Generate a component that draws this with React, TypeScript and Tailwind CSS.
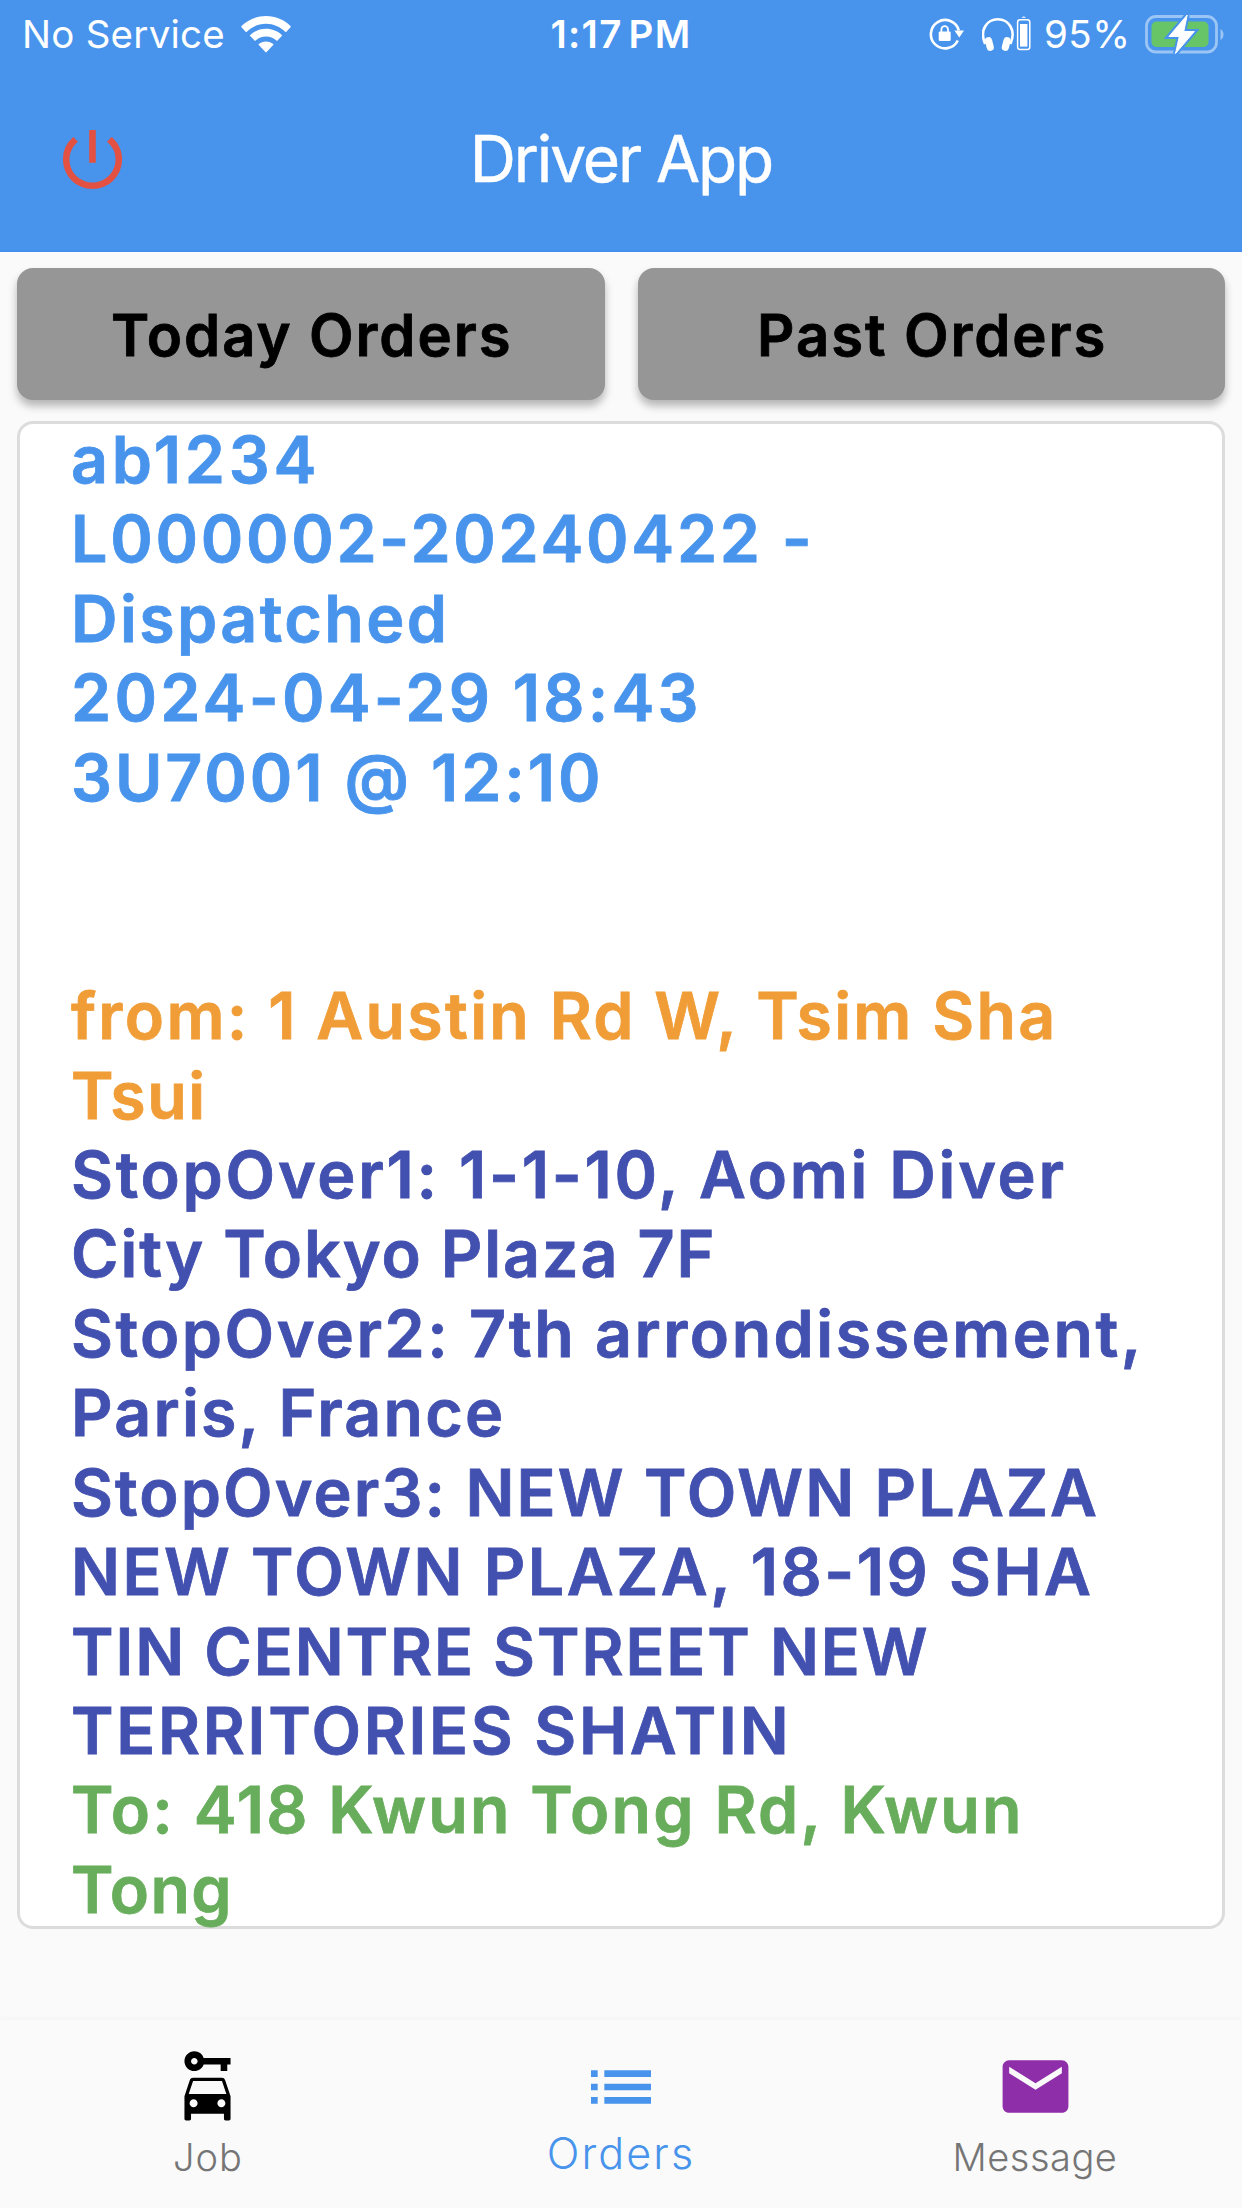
import { MdCarRental, MdEmail, MdList, MdPowerSettingsNew } from 'react-icons/md';

interface OrderLine {
  text: string;
  className: string;
}

const orderLines: OrderLine[] = [
  { text: 'ab1234', className: 'text-[#4894ec] tracking-[3.8px]' },
  { text: 'L000002-20240422 -', className: 'text-[#4894ec] tracking-[2.7px]' },
  { text: 'Dispatched', className: 'text-[#4894ec] tracking-[2.4px]' },
  { text: '2024-04-29 18:43', className: 'text-[#4894ec] tracking-[3.2px]' },
  { text: '3U7001 @ 12:10', className: 'text-[#4894ec] tracking-[2.9px]' },
  { text: '', className: '' },
  { text: '', className: '' },
  { text: 'from: 1 Austin Rd W, Tsim Sha', className: 'text-[#f09d38] tracking-[2.3px]' },
  { text: 'Tsui', className: 'text-[#f09d38] tracking-[1.5px]' },
  { text: 'StopOver1: 1-1-10, Aomi Diver', className: 'text-[#4250af] tracking-[2.75px]' },
  { text: 'City Tokyo Plaza 7F', className: 'text-[#4250af] tracking-[1.9px]' },
  { text: 'StopOver2: 7th arrondissement,', className: 'text-[#4250af] tracking-[2.5px]' },
  { text: 'Paris, France', className: 'text-[#4250af] tracking-[2.2px]' },
  { text: 'StopOver3: NEW TOWN PLAZA', className: 'text-[#4250af] tracking-[2.1px]' },
  { text: 'NEW TOWN PLAZA, 18-19 SHA', className: 'text-[#4250af] tracking-[2.5px]' },
  { text: 'TIN CENTRE STREET NEW', className: 'text-[#4250af] tracking-[1.9px]' },
  { text: 'TERRITORIES SHATIN', className: 'text-[#4250af] tracking-[2.7px]' },
  { text: 'To: 418 Kwun Tong Rd, Kwun', className: 'text-[#67ad5b] tracking-[2.25px]' },
  { text: 'Tong', className: 'text-[#67ad5b] tracking-[1.3px]' },
];

function WifiIcon() {
  return (
    <svg className="h-[37px] w-[50px]" viewBox="0 0 50 37" fill="white">
      <path d="M25 0C34.5 0 43.2 3.7 49.5 10.1Q50 10.7 49.5 11.3L45.4 15.8Q44.8 16.3 44.2 15.8C39.2 10.8 32.4 7.8 25 7.8S10.8 10.8 5.8 15.8Q5.2 16.3 4.6 15.8L.5 11.3Q0 10.7.5 10.1C6.8 3.7 15.5 0 25 0Z" />
      <path d="M25 12.7C31.2 12.7 36.7 15 40.8 18.9Q41.4 19.5 40.8 20.1L36.5 24.5Q35.9 25 35.3 24.5C32.6 22 29 20.5 25 20.5S17.4 22 14.7 24.5Q14.1 25 13.5 24.5L9.2 20.1Q8.6 19.5 9.2 18.9C13.3 15 18.8 12.7 25 12.7Z" />
      <path d="M25 25.5C27.9 25.5 30.3 26.4 32.3 28Q32.8 28.5 32.2 29.1L25.6 36Q25 36.6 24.4 36L17.8 29.1Q17.2 28.5 17.7 28C19.7 26.4 22.1 25.5 25 25.5Z" />
    </svg>
  );
}

function RotationLockIcon() {
  return (
    <svg className="h-[34px] w-[36px]" viewBox="0 0 36 34" fill="none">
      <path d="M28.8 23.5A14.2 14.2 0 1 1 29.8 13.5" stroke="white" strokeWidth="2.6" />
      <path d="M25.5 13.5h9.5l-4.7 7z" fill="white" />
      <rect x="9.7" y="14.5" width="12" height="9.5" rx="1.3" fill="white" />
      <path d="M12.4 15v-2.6a3.3 3.3 0 0 1 6.6 0V15" stroke="white" strokeWidth="1.8" />
    </svg>
  );
}

function HeadphonesIcon() {
  return (
    <svg className="h-[36px] w-[49px]" viewBox="0 0 49 36" fill="none">
      <path d="M3.2 28C-3.2 13.5 5.5 3.3 15.8 3.3S34.8 13.5 28.4 28" stroke="white" strokeWidth="2.6" />
      <rect x="3.8" y="21" width="7.2" height="14" rx="3.4" transform="rotate(-14 7.4 28)" fill="white" />
      <rect x="20.6" y="21" width="7.2" height="14" rx="3.4" transform="rotate(14 24.2 28)" fill="white" />
      <path d="M39.5 1.7Q41.7-.6 43.9 1.7z" fill="white" />
      <rect x="35.6" y="3.8" width="12.2" height="29.6" rx="2.4" stroke="white" strokeWidth="1.5" />
      <rect x="38" y="8" width="7.4" height="22.6" fill="white" />
    </svg>
  );
}

function BatteryIcon() {
  return (
    <svg className="h-[40px] w-[80px]" viewBox="0 0 80 40" fill="none">
      <rect x="1.5" y="2.5" width="70" height="35.5" rx="9.5" stroke="#9bc5f4" strokeWidth="2.8" />
      <path d="M75.5 15v11q3-2 3-5.5t-3-5.5z" fill="#9bc5f4" />
      <rect x="6.5" y="7.5" width="57" height="25.5" rx="5" fill="#68c567" />
      <path d="M42.2 1L24 22.5h10.3L30.5 39.5 49.3 17.5H38.8z" fill="white" stroke="#4894ec" strokeWidth="5" />
      <path d="M42.2 1L24 22.5h10.3L30.5 39.5 49.3 17.5H38.8z" fill="white" stroke="white" strokeWidth="1" strokeLinejoin="round" />
    </svg>
  );
}

function StatusBar() {
  return (
    <div className="grid h-[68px] grid-cols-3 items-center text-[38.5px] leading-[68px] text-white">
      <div className="flex items-center pl-[22px]">
        <span className="w-[219px] whitespace-nowrap tracking-[0.25px]">No Service</span>
        <WifiIcon />
      </div>
      <div className="text-center font-semibold tracking-[1.3px] whitespace-nowrap [word-spacing:-5px]">1:17 PM</div>
      <div className="flex items-center justify-end pr-[17px]">
        <RotationLockIcon />
        <div className="ml-[17px]">
          <HeadphonesIcon />
        </div>
        <span className="ml-[13px] w-[87px] whitespace-nowrap tracking-[0.5px]">95%</span>
        <div className="ml-[14px]">
          <BatteryIcon />
        </div>
      </div>
    </div>
  );
}

function Header() {
  return (
    <header className="h-[252px] border-b-2 border-[#4290ee] bg-[#4894ec]">
      <StatusBar />
      <div className="grid h-[182px] grid-cols-[1fr_auto_1fr] items-center">
        <button className="ml-[53px] w-fit">
          <MdPowerSettingsNew className="size-[79px] text-[#e25141]" />
        </button>
        <h1 className="text-[64px] leading-[80px] tracking-[-2.1px] text-white [-webkit-text-stroke:0.5px_white]">Driver App</h1>
      </div>
    </header>
  );
}

function OrderTab({ label }: { label: string }) {
  return (
    <button className="h-[132px] flex-1 rounded-[16px] bg-[#969696] pt-[2px] pl-[2px] text-[58px] font-semibold tracking-[1.95px] text-black shadow-[0_6px_8px_rgba(0,0,0,0.28)] [-webkit-text-stroke:0.8px_black]">
      {label}
    </button>
  );
}

function BottomNav() {
  return (
    <nav className="grid h-[188px] grid-cols-3 bg-[#fafafa] text-[38px] font-light text-[#757575] shadow-[0_-1px_6px_rgba(0,0,0,0.03)]">
      <button className="flex flex-col items-center pt-[28px]">
        <MdCarRental className="size-[79px] text-black" />
        <span className="mt-[5px] pl-[2px] leading-[50px] tracking-[1px]">Job</span>
      </button>
      <button className="flex flex-col items-center pt-[27px] text-[43px] text-[#4894ec]">
        <MdList className="size-[80px]" />
        <span className="mt-px leading-[50px] tracking-[2.1px]">Orders</span>
      </button>
      <button className="flex flex-col items-center pt-[27px]">
        <MdEmail className="size-[79px] text-[#8e2fa9]" />
        <span className="mt-[6px] leading-[50px] tracking-[0.5px]">Message</span>
      </button>
    </nav>
  );
}

export default function App() {
  return (
    <div className="flex h-[2208px] w-[1242px] flex-col overflow-hidden bg-[#fafafa] font-['Inter',sans-serif]">
      <Header />
      <div className="flex gap-[33px] px-[17px] pt-[16px]">
        <OrderTab label="Today Orders" />
        <OrderTab label="Past Orders" />
      </div>
      <main className="flex-1 px-[17px] pt-[21px]">
        <div className="h-[1508px] rounded-[16px] bg-white pl-[54px] inset-ring-[3px] inset-ring-[#dcdcdc]">
          {orderLines.map((line, i) => (
            <p
              key={i}
              className={`h-[79.44px] text-[64.5px] leading-[78.6px] font-semibold whitespace-nowrap [-webkit-text-stroke:0.8px] ${line.className}`}
            >
              {line.text}
            </p>
          ))}
        </div>
      </main>
      <BottomNav />
    </div>
  );
}
